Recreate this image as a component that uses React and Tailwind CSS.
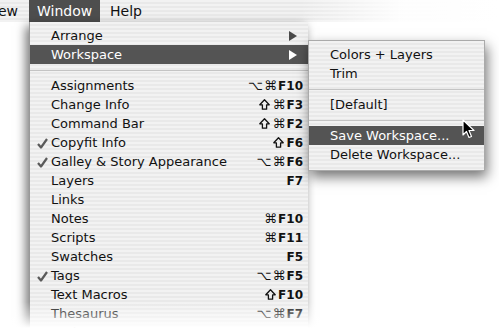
import React from "react";

const stripes =
  "bg-[repeating-linear-gradient(to_bottom,#f2f2f2_0px,#f2f2f2_2px,#e9e9e9_2px,#e9e9e9_4px)]";

const Check = () => (
  <svg width="11" height="11" viewBox="0 0 11 11" className="absolute left-[7px] top-[5px]">
    <path d="M1 6 L4 9.5 L10 1" fill="none" stroke="#5a5a5a" strokeWidth="2.2" strokeLinejoin="round" />
  </svg>
);

const Arrow = ({ light }) => (
  <svg width="8" height="10" viewBox="0 0 8 10">
    <path d="M0 0 L8 5 L0 10 Z" fill={light ? "#ffffff" : "#4a4a4a"} />
  </svg>
);

const Shift = () => (
  <svg width="11" height="11" viewBox="0 0 11 11" className="mr-[2px]">
    <path
      d="M5.5 0.8 L10.2 5.8 L7.6 5.8 L7.6 10.2 L3.4 10.2 L3.4 5.8 L0.8 5.8 Z"
      fill="none"
      stroke="#111"
      strokeWidth="1.3"
      strokeLinejoin="round"
    />
  </svg>
);

// keys: string with "s" = shift, "o" = option, "c" = command, then the key name
const Keys = ({ mods, k }) => (
  <span className="flex items-center text-[12px] font-semibold leading-none">
    {mods.split("").map((m, i) =>
      m === "s" ? (
        <Shift key={i} />
      ) : (
        <span key={i} className="text-[13px] font-normal mr-[1px]">
          {m === "o" ? "⌥" : "⌘"}
        </span>
      )
    )}
    <span>{k}</span>
  </span>
);

const Row = ({ label, mods, k, checked, sub, active }) => (
  <div
    className={
      "relative flex items-center h-[19px] pl-[21px] pr-[5px] " +
      (active ? "bg-[#545454] text-white" : "text-[#111]")
    }
  >
    {checked && <Check />}
    <span className="flex-1 text-[13px] leading-none">{label}</span>
    {k && <Keys mods={mods} k={k} />}
    {sub && (
      <span className="mr-[6px]">
        <Arrow light={active} />
      </span>
    )}
  </div>
);

const Sep = () => (
  <div className="h-[12px] flex items-center">
    <div className="w-full h-px bg-[#c4c4c4]" />
  </div>
);

const items = [
  ["Assignments", "oc", "F10"],
  ["Change Info", "sc", "F3"],
  ["Command Bar", "sc", "F2"],
  ["Copyfit Info", "s", "F6", true],
  ["Galley & Story Appearance", "oc", "F6", true],
  ["Layers", "", "F7"],
  ["Links", "", ""],
  ["Notes", "c", "F10"],
  ["Scripts", "c", "F11"],
  ["Swatches", "", "F5"],
  ["Tags", "oc", "F5", true],
  ["Text Macros", "s", "F10"],
  ["Thesaurus", "oc", "F7"],
  ["Tools", "", ""],
];

export default function App() {
  return (
    <div className="w-[499px] h-[328px] bg-white overflow-hidden relative font-['DejaVu_Sans',sans-serif]">
      {/* menu bar */}
      <div className={"h-[22px] flex items-stretch text-[14px] text-[#111] " + stripes}>
        <div className="pr-[9px] flex items-center -ml-[2px]">ew</div>
        <div className="w-[71px] ml-[2px] flex items-center justify-center bg-[#4e4e4e] text-white">
          Window
        </div>
        <div className="pl-[10px] flex items-center">Help</div>
      </div>
      {/* fade out the bar on the right */}
      <div className="absolute top-0 left-[300px] w-[199px] h-[22px] bg-gradient-to-r from-transparent via-white/90 to-white" />

      <div className="flex items-start">
        <div className="w-[29px]" />
        {/* main menu */}
        <div
          className={
            "relative w-[279px] pt-[4px] pb-[4px] shadow-[-3px_4px_10px_rgba(0,0,0,0.55)] border-l border-[#999] " +
            stripes
          }
        >
          <Row label="Arrange" sub />
          <Row label="Workspace" sub active />
          <Sep />
          {items.map(([l, m, k, c]) => (
            <Row key={l} label={l} mods={m} k={k} checked={c} />
          ))}
        </div>
        {/* submenu */}
        <div
          className={
            "relative mt-[18px] w-[177px] pt-[4px] pb-[6px] border border-[#aaa] shadow-[2px_6px_12px_rgba(0,0,0,0.55)] " +
            stripes
          }
        >
          <Row label="Colors + Layers" />
          <Row label="Trim" />
          <Sep />
          <Row label="[Default]" />
          <Sep />
          <Row label="Save Workspace..." active />
          <Row label="Delete Workspace..." />
          <svg
            width="14"
            height="20"
            viewBox="0 0 14 20"
            className="absolute left-[153px] top-[78px]"
          >
            <path
              d="M1 1 L1 16 L4.5 12.5 L7 18.5 L9.5 17.5 L7 11.5 L12 11.5 Z"
              fill="#000"
              stroke="#fff"
              strokeWidth="1.2"
              strokeLinejoin="round"
            />
          </svg>
        </div>
      </div>
      {/* bottom fade */}
      <div className="absolute left-0 bottom-0 w-full h-[26px] bg-gradient-to-b from-transparent via-white/40 to-white" />
    </div>
  );
}
